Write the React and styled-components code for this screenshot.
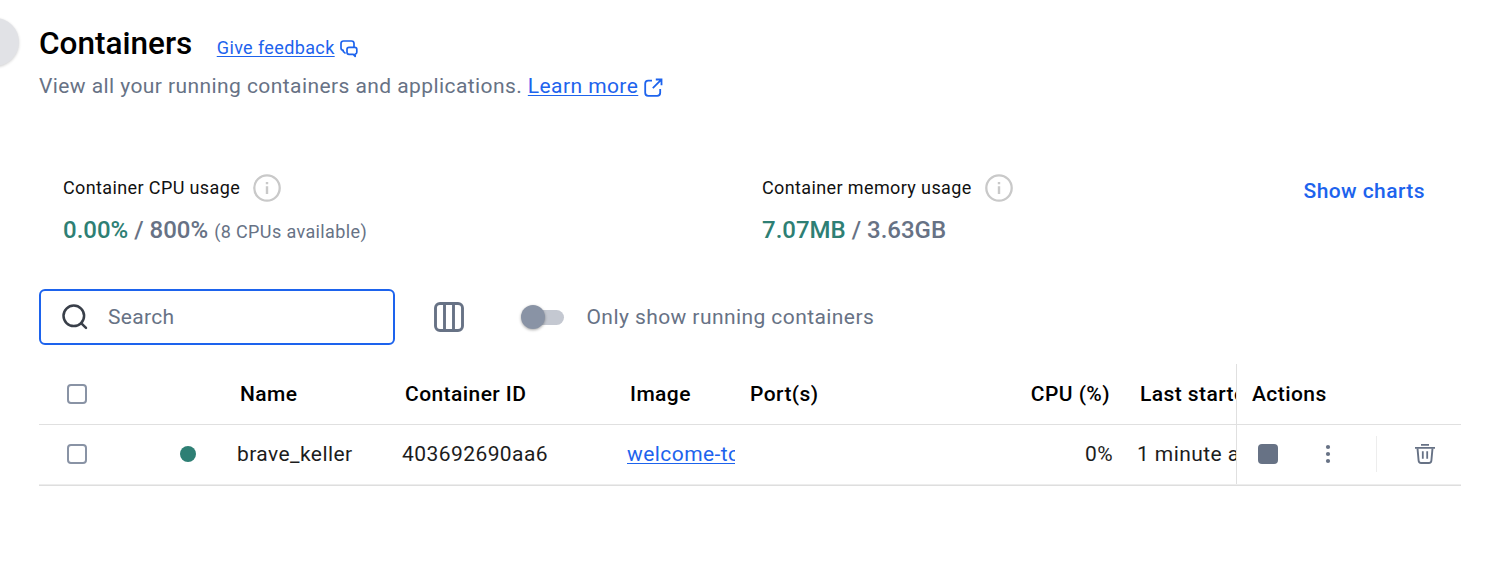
import React from "react";
import styled, { createGlobalStyle } from "styled-components";

const GlobalStyle = createGlobalStyle`
  *, *::before, *::after { box-sizing: border-box; }
  body {
    margin: 0;
    background: #fff;
    color: #000;
    font-family: Roboto, "Liberation Sans", sans-serif;
    font-size: 21px;
  }
`;

const Page = styled.main`
  position: relative;
  width: 1486px;
  height: 568px;
  padding: 24px 25px 0 39px;
  overflow: hidden;
  background: #fff;
`;

const SidebarHandle = styled.div`
  position: absolute;
  top: 18px;
  left: -29px;
  width: 48px;
  height: 48px;
  border-radius: 50%;
  background: #e1e2e6;
  box-shadow: 0 1px 3px rgba(0, 0, 0, 0.18);
`;

const TitleRow = styled.div`
  display: flex;
  align-items: flex-start;
  height: 44px;
`;

const Title = styled.h1`
  margin: 0 24.5px 0 0;
  font-size: 31.5px;
  font-weight: 500;
  line-height: 40px;
  letter-spacing: 0;
`;

const Link = styled.a`
  color: #1d63ed;
  text-decoration: underline;
  text-decoration-thickness: 1px;
  text-underline-offset: 2px;
`;

const Feedback = styled.div`
  display: flex;
  align-items: center;
  gap: 5px;
  padding-top: 13px;
  font-size: 18px;
  line-height: 22px;
  letter-spacing: 0.38px;
  color: #1d63ed;

  svg { margin-top: 2px; }
`;

const Subtitle = styled.p`
  display: flex;
  align-items: center;
  margin: 0;
  height: 36px;
  line-height: 36px;
  letter-spacing: 0.42px;
  color: #677285;
  white-space: pre;

  svg { margin: 3px 0 0 6px; }
`;

const Stats = styled.section`
  display: flex;
  margin-top: 70px;
  padding-left: 24px;
  height: 115px;
`;

const Stat = styled.div`
  width: ${(p) => p.$width};
`;

const StatLabel = styled.div`
  display: flex;
  align-items: center;
  gap: 13px;
  height: 28px;
  font-size: 18px;
  line-height: 22px;
  letter-spacing: 0.38px;
`;

const StatName = styled.span`
  color: #111;
`;

const StatValue = styled.div`
  margin-top: 12px;
  font-size: 24px;
  font-weight: 500;
  line-height: 32px;
  color: #677285;
  white-space: pre;
`;

const Used = styled.span`
  color: #2e7f74;
`;

const Note = styled.span`
  font-size: 18px;
  font-weight: 400;
  letter-spacing: 0.38px;
`;

const ChartsButton = styled.button`
  align-self: flex-start;
  margin: 4px 0 0 0.5px;
  padding: 0;
  border: 0;
  background: none;
  font: 500 21px/26px Roboto, sans-serif;
  letter-spacing: 0.42px;
  color: #1d63ed;
`;

const Toolbar = styled.div`
  display: flex;
  align-items: center;
  height: 56px;
`;

const SearchField = styled.label`
  display: flex;
  align-items: center;
  width: 356px;
  height: 56px;
  padding-left: 20px;
  border: 2px solid #1d63ed;
  border-radius: 6px;
`;

const SearchInput = styled.input`
  width: 240px;
  margin-left: 19px;
  padding: 0;
  border: 0;
  outline: 0;
  font: 400 21px/28px Roboto, sans-serif;
  letter-spacing: 0.3px;

  &::placeholder { color: #677285; opacity: 1; }
`;

const ColumnsButton = styled.button`
  display: flex;
  margin-left: 39px;
  padding: 0;
  border: 0;
  background: none;
`;

const SwitchTrack = styled.span`
  display: flex;
  align-items: center;
  width: 40px;
  height: 15px;
  margin-left: 60px;
  border-radius: 8px;
  background: #c4c8d1;
`;

const SwitchThumb = styled.span`
  flex: none;
  width: 24px;
  height: 24px;
  margin-left: -3px;
  border-radius: 50%;
  background: #8993a5;
  box-shadow: 0 1px 3px rgba(0, 0, 0, 0.35);
`;

const SwitchLabel = styled.span`
  margin-left: 22.5px;
  letter-spacing: 0.42px;
  color: #677285;
`;

const Table = styled.div`
  margin-top: 19px;
`;

const Row = styled.div`
  display: grid;
  grid-template-columns: 75px 36px 75px 165px 225px 120px 390px 111px 225px;
  height: ${(p) => (p.$header ? "61px" : "60px")};
  border-bottom: 1px solid ${(p) => (p.$header ? "#e0e0e0" : "#ededed")};
  font-weight: ${(p) => (p.$header ? 500 : 400)};
  color: ${(p) => (p.$header ? "#000" : "#1c1c1c")};
`;

const TableEnd = styled.div`
  height: 1px;
  background: #dedede;
`;

const Cell = styled.div`
  display: flex;
  align-items: center;
  justify-content: ${(p) => p.$align || "flex-start"};
  min-width: 0;
  padding: 0 ${(p) => p.$end ?? p.$pad ?? "0"} 0 ${(p) => p.$pad || "0"};
  overflow: hidden;
  white-space: nowrap;
  line-height: 30px;
  letter-spacing: 0.43px;

  ${Row}:not(:first-child) > & { padding-bottom: 1px; }
`;

const ActionsCell = styled(Cell)`
  border-left: 1px solid #e0e0e0;
`;

const Checkbox = styled.span`
  width: 20px;
  height: 20px;
  margin-left: 1px;
  border: 2px solid #8993a5;
  border-radius: 4px;
`;

const StatusDot = styled.span`
  width: 16px;
  height: 16px;
  margin-left: 1px;
  border-radius: 50%;
  background: #2e7f74;
`;

const StopButton = styled.button`
  width: 20px;
  height: 20px;
  margin-right: 48px;
  padding: 0;
  border: 0;
  border-radius: 4px;
  background: #677285;
`;

const Divider = styled.span`
  width: 1px;
  height: 36px;
  margin: 0 38px 0 46px;
  background: #ededed;
`;

const FeedbackIcon = () => (
  <svg width="18" height="18" viewBox="0 0 18 18" fill="none" stroke="#1d63ed" strokeWidth="1.7" strokeLinejoin="round">
    <path d="M5 13L3.200 11.300V10.400C1.700 10.100 1 9.300 1 8V3.500C1 2 2 1 3.500 1H11.500C13 1 14 2 14 3.500V7" strokeLinecap="round" />
    <path d="M9 7.300H14.700C16 7.300 16.800 8 16.800 9.200V12.300C16.800 13.400 16.200 14 15.200 14.200V16.300L13.300 14.300H9C7.700 14.300 7 13.500 7 12.300V9.200C7 8 7.700 7.300 9 7.300Z" />
  </svg>
);

const ExternalIcon = () => (
  <svg width="19" height="19" viewBox="0 0 19 19" fill="none" stroke="#1d63ed" strokeWidth="1.800">
    <path d="M8 2.700H4.200C2.200 2.700 1.200 3.700 1.200 5.700V14.800C1.200 16.800 2.200 17.800 4.200 17.800H13.200C15.200 17.800 16.200 16.800 16.200 14.800V11" />
    <path d="M11.800 1.500H17.500V7.200M17.300 1.700L8.800 10.200" />
  </svg>
);

const InfoIcon = () => (
  <svg width="28" height="28" viewBox="0 0 28 28">
    <circle cx="14" cy="14" r="12.700" fill="none" stroke="#c9c9c9" strokeWidth="2.300" />
    <path d="M12.800 8H15.200V10.200H12.800ZM12.800 12.300H15.200V20H12.800Z" fill="#c9c9c9" />
  </svg>
);

const SearchIcon = () => (
  <svg width="28" height="28" viewBox="0 0 28 28" fill="none" stroke="#393f49" strokeWidth="2.500" strokeLinecap="round">
    <circle cx="12.800" cy="12.800" r="10.300" />
    <path d="M20.100 20.100L25 24.900" />
  </svg>
);

const ColumnsIcon = () => (
  <svg width="30" height="30" viewBox="0 0 30 30" fill="none" stroke="#677285" strokeWidth="2.900">
    <rect x="1.500" y="1.500" width="27" height="27" rx="4.500" />
    <path d="M10.500 2V28M19.500 2V28" />
  </svg>
);

const MoreIcon = () => (
  <svg width="4" height="18" viewBox="0 0 4 18" fill="#677285" overflow="visible">
    <circle cx="2" cy="2" r="2.100" />
    <circle cx="2" cy="9" r="2.100" />
    <circle cx="2" cy="16" r="2.100" />
  </svg>
);

const TrashIcon = () => (
  <svg width="20" height="20" viewBox="0 0 20 20" fill="none" stroke="#677285" strokeWidth="1.900">
    <path d="M6 0.950H14M0 3.900H20" strokeWidth="1.800" />
    <path d="M2.500 4.300L3.600 16.500C3.700 18.100 4.600 19 6.200 19H13.800C15.400 19 16.300 18.100 16.400 16.500L17.500 4.300" />
    <path d="M7.800 7.300V14.700M12.200 7.300V14.700" strokeWidth="1.800" />
  </svg>
);

export default function App() {
  return (
    <>
      <GlobalStyle />
      <Page>
        <SidebarHandle />
        <TitleRow>
          <Title>Containers</Title>
          <Feedback>
            <Link>Give feedback</Link>
            <FeedbackIcon />
          </Feedback>
        </TitleRow>
        <Subtitle>
          {"View all your running containers and applications. "}
          <Link>Learn more</Link>
          <ExternalIcon />
        </Subtitle>

        <Stats>
          <Stat $width="699px">
            <StatLabel><StatName>Container CPU usage</StatName><InfoIcon /></StatLabel>
            <StatValue>
              <Used>0.00%</Used> / 800% <Note>(8 CPUs available)</Note>
            </StatValue>
          </Stat>
          <Stat $width="541px">
            <StatLabel><StatName>Container memory usage</StatName><InfoIcon /></StatLabel>
            <StatValue>
              <Used>7.07MB</Used> / 3.63GB
            </StatValue>
          </Stat>
          <ChartsButton>Show charts</ChartsButton>
        </Stats>

        <Toolbar>
          <SearchField>
            <SearchIcon />
            <SearchInput placeholder="Search" />
          </SearchField>
          <ColumnsButton><ColumnsIcon /></ColumnsButton>
          <SwitchTrack><SwitchThumb /></SwitchTrack>
          <SwitchLabel>Only show running containers</SwitchLabel>
        </Toolbar>

        <Table>
          <Row $header>
            <Cell $align="center"><Checkbox /></Cell>
            <Cell />
            <Cell />
            <Cell $pad="15px">Name</Cell>
            <Cell $pad="15px">Container ID</Cell>
            <Cell $pad="15px">Image</Cell>
            <Cell $pad="15px" $align="space-between"><span>Port(s)</span><span>CPU (%)</span></Cell>
            <Cell $pad="15px" $end="0">Last started</Cell>
            <ActionsCell $pad="15px">Actions</ActionsCell>
          </Row>
          <Row>
            <Cell $align="center"><Checkbox /></Cell>
            <Cell />
            <Cell $align="center"><StatusDot /></Cell>
            <Cell $pad="12px">brave_keller</Cell>
            <Cell $pad="12px">403692690aa6</Cell>
            <Cell $pad="12px" $end="0"><Link>welcome-to-docker</Link></Cell>
            <Cell $pad="12px" $align="flex-end">0%</Cell>
            <Cell $pad="12px" $end="0">1 minute ago</Cell>
            <ActionsCell $pad="21px" $end="0">
              <StopButton />
              <MoreIcon />
              <Divider />
              <TrashIcon />
            </ActionsCell>
          </Row>
          <TableEnd />
        </Table>
      </Page>
    </>
  );
}
